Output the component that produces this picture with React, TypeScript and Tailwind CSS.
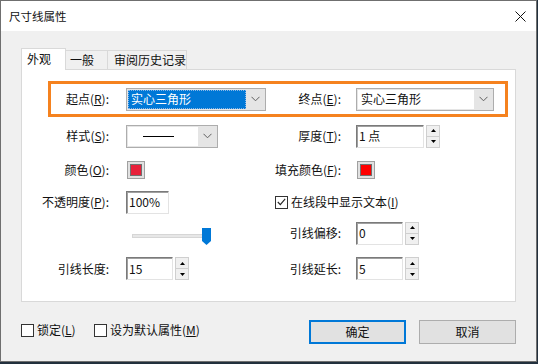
import React from 'react';

const Chevron = () => (
  <svg width="9" height="6" viewBox="0 0 9 6">
    <path d="M0.5 0.8L4.5 4.8L8.5 0.8" fill="none" stroke="#606060" strokeWidth="1" />
  </svg>
);

const Combo = ({ w, children, selected }: { w: string; children: React.ReactNode; selected?: boolean }) => (
  <div className={`flex h-[23px] border border-[#adadad] bg-[#e5e5e5] p-px ${w}`}>
    <div
      className={
        selected
          ? 'flex flex-1 items-center bg-[#0078d7] pl-[3px] text-white outline outline-1 outline-dotted outline-[#8ab8e8] -outline-offset-1'
          : 'flex flex-1 items-center bg-white pl-[3px]'
      }
    >
      {children}
    </div>
    <div className="flex w-[18px] items-center justify-center">
      <Chevron />
    </div>
  </div>
);

const Spin = () => (
  <div className="ml-[2px] flex h-[23px] w-[14px] flex-col border border-[#cfcfcf] bg-[#f0f0f0]">
    <div className="flex flex-1 items-center justify-center border-b border-[#cfcfcf]">
      <svg width="5" height="3" viewBox="0 0 5 3">
        <path d="M2.5 0L5 3H0z" fill="#000" />
      </svg>
    </div>
    <div className="flex flex-1 items-center justify-center">
      <svg width="5" height="3" viewBox="0 0 5 3">
        <path d="M0 0H5L2.5 3z" fill="#000" />
      </svg>
    </div>
  </div>
);

const Field = ({ w, value }: { w: string; value: string }) => (
  <div
    className={`flex h-[23px] items-center border border-t-[#7a7a7a] border-l-[#7a7a7a] border-r-[#e3e3e3] border-b-[#e3e3e3] bg-white pl-[2px] shadow-[inset_1px_1px_0_#a0a0a0] ${w}`}
  >
    {value}
  </div>
);

const Swatch = ({ color }: { color: string }) => (
  <div className="flex h-[18px] w-[18px] items-center justify-center border border-[#a0a0a0] bg-[#e1e1e1]">
    <div className={`h-[12px] w-[12px] border border-[#707070] ${color}`} />
  </div>
);

const CheckBox = ({ checked }: { checked?: boolean }) => (
  <div className="flex h-[13px] w-[13px] shrink-0 items-center justify-center border border-[#333] bg-white">
    {checked && (
      <svg width="9" height="8" viewBox="0 0 9 8">
        <path d="M0.8 4L3.3 6.6L8.2 0.8" fill="none" stroke="#222" strokeWidth="1.1" />
      </svg>
    )}
  </div>
);

const Key = ({ k }: { k: string }) => (
  <>
    (<u>{k}</u>)
  </>
);

const Label1 = ({ children }: { children: React.ReactNode }) => (
  <div className="flex w-[104px] justify-end whitespace-nowrap pr-[17px]">{children}</div>
);

const Label2 = ({ children }: { children: React.ReactNode }) => (
  <div className="flex w-[80px] justify-end whitespace-nowrap pr-[15px]">{children}</div>
);

export default function App() {
  return (
    <div className="h-[364px] w-[538px] bg-[#22303d] font-['Microsoft_YaHei','Noto_Sans_CJK_SC',sans-serif] text-[12px] leading-[16px] text-[#111]">
      <div className="flex h-[362px] w-[537px] flex-col border border-[#6f6f6f] bg-[#f0f0f0]">
        {/* title bar */}
        <div className="flex h-[30px] items-center justify-between bg-white pl-[8px] pr-[10px]">
          <span className="text-[11.5px]">尺寸线属性</span>
          <svg width="11" height="11" viewBox="0 0 11 11">
            <path d="M0.5 0.5L10.5 10.5M10.5 0.5L0.5 10.5" stroke="#111" strokeWidth="1" />
          </svg>
        </div>

        {/* tabs */}
        <div className="ml-[20px] mt-[17px] flex items-end">
          <div className="relative z-10 -mb-px h-[22px] w-[45px] border border-b-0 border-[#d9d9d9] bg-white pl-[5px] pt-[2px]">
            外观
          </div>
          <div className="h-[19px] w-[42px] border border-l-0 border-b-0 border-[#d9d9d9] bg-[#f0f0f0] pl-[4px] pt-[1px]">
            一般
          </div>
          <div className="h-[19px] w-[79px] border border-l-0 border-b-0 border-[#d9d9d9] bg-[#f0f0f0] pl-[6px] pt-[1px]">
            审阅历史记录
          </div>
        </div>

        {/* panel */}
        <div className="ml-[20px] flex h-[233px] w-[495px] flex-col border border-[#d9d9d9] bg-white">
          <div className="ml-[26px] mt-[11px] flex h-[36px] w-[460px] items-center border-[3px] border-[#f5821f]">
            <div className="flex w-[75px] justify-end whitespace-nowrap pr-[17px]">
              起点<Key k="R" />:
            </div>
            <Combo w="w-[140px]" selected>
              实心三角形
            </Combo>
            <div className="flex w-[90px] justify-end whitespace-nowrap pr-[15px]">
              终点<Key k="E" />:
            </div>
            <Combo w="w-[138px]">实心三角形</Combo>
          </div>

          <div className="flex h-[38px] items-center">
            <Label1>
              样式<Key k="S" />:
            </Label1>
            <div className="w-[150px]">
              <Combo w="w-[92px]">
                <div className="ml-[12px] h-px w-[31px] bg-black" />
              </Combo>
            </div>
            <Label2>
              厚度<Key k="T" />:
            </Label2>
            <Field w="w-[68px]" value="1 点" />
            <Spin />
          </div>

          <div className="flex h-[29px] items-center">
            <Label1>
              颜色<Key k="O" />:
            </Label1>
            <div className="w-[150px] pl-px">
              <Swatch color="bg-[#e8203a]" />
            </div>
            <Label2>
              填充颜色<Key k="F" />:
            </Label2>
            <div className="pl-px">
              <Swatch color="bg-[#ff0000]" />
            </div>
          </div>

          <div className="flex h-[36px] items-center">
            <Label1>
              不透明度<Key k="P" />:
            </Label1>
            <div className="w-[149px]">
              <Field w="w-[43px]" value="100%" />
            </div>
            <div className="flex items-center gap-[3px]">
              <CheckBox checked />
              <span>
                在线段中显示文本<Key k="I" />
              </span>
            </div>
          </div>

          <div className="flex h-[26px] items-center">
            <div className="w-[104px]" />
            <div className="w-[150px] pl-[6px] pt-[6px]">
              <svg width="86" height="17" viewBox="0 0 86 17">
                <rect x="0.5" y="6.5" width="73" height="3" fill="#e7e7e7" stroke="#d6d6d6" />
                <path d="M70 0H79V13L74.5 17L70 13Z" fill="#0078d7" />
              </svg>
            </div>
            <Label2>引线偏移:</Label2>
            <Field w="w-[47px]" value="0" />
            <Spin />
          </div>

          <div className="flex h-[45px] items-center">
            <Label1>引线长度:</Label1>
            <div className="flex w-[150px] items-center">
              <Field w="w-[47px]" value="15" />
              <Spin />
            </div>
            <Label2>引线延长:</Label2>
            <Field w="w-[47px]" value="5" />
            <Spin />
          </div>
        </div>

        {/* bottom bar */}
        <div className="ml-[20px] mt-[18px] flex w-[495px] items-start">
          <div className="mt-[2px] flex w-[73px] items-center gap-[3px]">
            <CheckBox />
            <span className="whitespace-nowrap">
              锁定<Key k="L" />
            </span>
          </div>
          <div className="mt-[2px] flex items-center gap-[3px]">
            <CheckBox />
            <span className="whitespace-nowrap">
              设为默认属性<Key k="M" />
            </span>
          </div>
          <div className="ml-auto flex gap-[13px]">
            <button className="h-[24px] w-[97px] border border-[#0078d7] bg-[#e1e1e1] shadow-[inset_0_0_0_1px_#0078d7]">
              确定
            </button>
            <button className="h-[24px] w-[97px] border border-[#adadad] bg-[#e1e1e1]">取消</button>
          </div>
        </div>
      </div>
    </div>
  );
}
